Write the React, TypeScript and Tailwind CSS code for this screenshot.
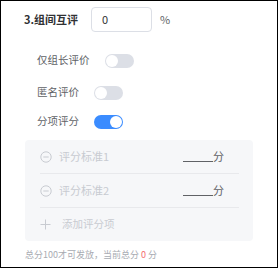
import React from "react";

const font = { fontFamily: '"Noto Sans CJK SC", "Noto Sans", sans-serif' };

function Toggle({ on }: { on?: boolean }) {
  return (
    <div
      className={`relative w-[29px] h-[14px] rounded-full ${on ? "bg-[#3b8cff]" : "bg-[#dcdfe6]"}`}
    >
      <div
        className={`absolute top-[1px] w-[12px] h-[12px] rounded-full bg-white ${on ? "left-[16px]" : "left-[1px]"}`}
      />
    </div>
  );
}

function MinusCircle() {
  return (
    <svg width="12" height="12" viewBox="0 0 12 12" fill="none">
      <circle cx="6" cy="6" r="5.2" stroke="#c8cbd1" strokeWidth="1" />
      <line x1="3.3" y1="6" x2="8.7" y2="6" stroke="#c8cbd1" strokeWidth="1" />
    </svg>
  );
}

function Plus() {
  return (
    <svg width="11" height="11" viewBox="0 0 11 11" fill="none">
      <line x1="0.5" y1="5.5" x2="10.5" y2="5.5" stroke="#c8cbd1" strokeWidth="1" />
      <line x1="5.5" y1="0.5" x2="5.5" y2="10.5" stroke="#c8cbd1" strokeWidth="1" />
    </svg>
  );
}

export default function App() {
  return (
    <div style={font} className="w-[278px] h-[268px] border border-black bg-white pl-[23px] pt-[5px] flex flex-col">
      <div className="flex items-center h-[26px]">
        <span className="w-[67px] text-[11px] font-bold text-[#303133] leading-none">3.组间互评</span>
        <div className="w-[61px] h-[25px] border border-[#dcdfe6] rounded-[4px] flex items-center pl-[10px] text-[11px] text-[#303133]">
          0
        </div>
        <span className="ml-[8px] text-[11px] text-[#606266]">%</span>
      </div>

      <div className="flex items-center h-[15px] mt-[21px] pl-[13px]">
        <span className="text-[10.5px] text-[#606266] leading-none">仅组长评价</span>
        <div className="ml-[15px]"><Toggle /></div>
      </div>
      <div className="flex items-center h-[15px] mt-[17px] pl-[13px]">
        <span className="text-[10.5px] text-[#606266] leading-none">匿名评价</span>
        <div className="ml-[15px]"><Toggle /></div>
      </div>
      <div className="flex items-center h-[15px] mt-[14px] pl-[13px]">
        <span className="text-[10.5px] text-[#606266] leading-none">分项评分</span>
        <div className="ml-[15px]"><Toggle on /></div>
      </div>

      <div className="mt-[11px] w-[228px] h-[101px] ml-[1px] bg-[#f6f7f9] rounded-[4px] pl-[15px] pr-[14px] flex flex-col">
        <div className="h-[34px] border-b border-[#e8e9ec] flex items-center justify-between pr-[15px]">
          <div className="flex items-center">
            <MinusCircle />
            <span className="ml-[7px] text-[11px] text-[#c8cbd1] leading-none">评分标准1</span>
          </div>
          <div className="flex items-end text-[11px] text-[#606266] leading-none">
            <span className="w-[30px] border-b border-[#606266] mb-[0px]" />
            <span>分</span>
          </div>
        </div>
        <div className="h-[34px] border-b border-[#e8e9ec] flex items-center justify-between pr-[15px]">
          <div className="flex items-center">
            <MinusCircle />
            <span className="ml-[7px] text-[11px] text-[#c8cbd1] leading-none">评分标准2</span>
          </div>
          <div className="flex items-end text-[11px] text-[#606266] leading-none">
            <span className="w-[30px] border-b border-[#606266]" />
            <span>分</span>
          </div>
        </div>
        <div className="h-[32px] flex items-center">
          <Plus />
          <span className="ml-[11px] text-[10.5px] text-[#c8cbd1] leading-none">添加评分项</span>
        </div>
      </div>

      <div className="mt-[9px] ml-[1px] text-[9px] text-[#a8abb2] leading-none">
        总分100才可发放，当前总分 <span className="text-[#f56c6c]">0</span> 分
      </div>
    </div>
  );
}
